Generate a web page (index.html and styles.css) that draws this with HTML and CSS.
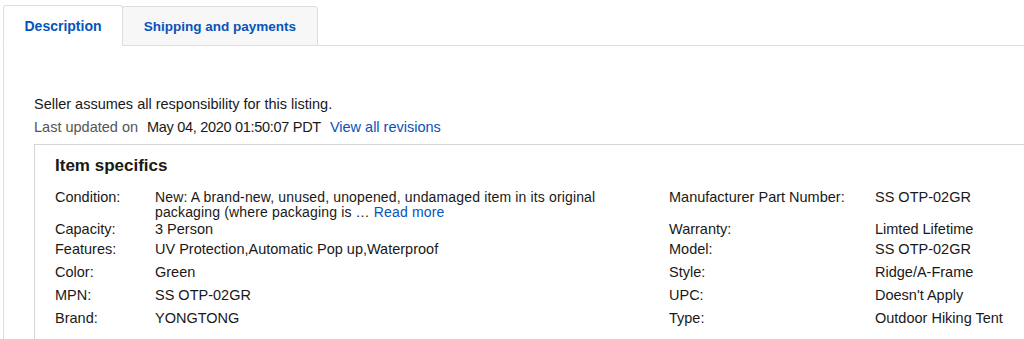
FILE: index.html
```html
<!DOCTYPE html>
<html lang="en">
<head>
<meta charset="utf-8">
<title>Item description</title>
<link rel="stylesheet" href="styles.css">
</head>
<body>
<div class="tabs">
  <div class="tab tab-active">Description</div>
  <div class="tab">Shipping and payments</div>
  <div class="tab-rest"></div>
</div>
<div class="panel">
  <p class="line">Seller assumes all responsibility for this listing.</p>
  <p class="line line-2"><span class="muted">Last updated on</span><span class="date">May 04, 2020 01:50:07 PDT</span><a class="link rev" href="#">View all revisions</a></p>
  <section class="specs">
    <h2 class="specs-title">Item specifics</h2>
    <div class="grid">
      <div class="lab">Condition:</div>
      <div class="val val-main val-wrap">New: A brand-new, unused, unopened, undamaged item in its original packaging (where packaging is … <a class="link" href="#">Read more</a></div>
      <div class="lab">Manufacturer Part Number:</div>
      <div class="val">SS OTP-02GR</div>

      <div class="lab">Capacity:</div>
      <div class="val val-main">3 Person</div>
      <div class="lab">Warranty:</div>
      <div class="val">Limted Lifetime</div>

      <div class="lab">Features:</div>
      <div class="val val-main">UV Protection,Automatic Pop up,Waterproof</div>
      <div class="lab">Model:</div>
      <div class="val">SS OTP-02GR</div>

      <div class="lab">Color:</div>
      <div class="val val-main">Green</div>
      <div class="lab">Style:</div>
      <div class="val">Ridge/A-Frame</div>

      <div class="lab">MPN:</div>
      <div class="val val-main">SS OTP-02GR</div>
      <div class="lab">UPC:</div>
      <div class="val">Doesn't Apply</div>

      <div class="lab">Brand:</div>
      <div class="val val-main">YONGTONG</div>
      <div class="lab">Type:</div>
      <div class="val">Outdoor Hiking Tent</div>
    </div>
  </section>
</div>
</body>
</html>
```
FILE: styles.css
```css
html, body {
  margin: 0;
  padding: 0;
  background: #ffffff;
  overflow: hidden;
  height: 339px;
}
body {
  font-family: "Liberation Sans", Arial, sans-serif;
  color: #191919;
  font-size: 14.5px;
}
.tabs {
  display: flex;
  align-items: flex-end;
  padding-top: 5px;
  padding-left: 3px;
  height: 41px;
}
.tab {
  box-sizing: border-box;
  height: 40px;
  border: 1px solid #dddddd;
  background: #f7f7f7;
  border-radius: 3px 3px 0 0;
  color: #0654ba;
  font-weight: bold;
  font-size: 13.5px;
  display: flex;
  align-items: center;
  justify-content: center;
  width: 196px;
  margin-left: -1px;
  padding-top: 1px;
}
.tab-active {
  margin-left: 0;
  width: 120px;
  height: 41px;
  background: #ffffff;
  border-bottom-color: #ffffff;
  font-size: 14px;
  padding-top: 0;
  position: relative;
  z-index: 1;
}
.tab-rest {
  flex: 1;
  border-bottom: 1px solid #dddddd;
}
.panel {
  box-sizing: border-box;
  margin-left: 3px;
  margin-right: -40px;
  border-left: 1px solid #dddddd;
  padding: 46px 0 0 30px;
  height: 293px;
  overflow: hidden;
}
.line {
  margin: 0;
  line-height: 24px;
}
.line-2 {
  margin-top: -1px;
}
.muted {
  color: #555555;
}
.date {
  margin-left: 9px;
  letter-spacing: -0.3px;
}
.link {
  color: #0654ba;
  text-decoration: none;
}
.rev {
  margin-left: 9px;
}
.specs {
  box-sizing: border-box;
  margin-top: 5px;
  border: 1px solid #d6d6d6;
  border-right: none;
  border-bottom: none;
  padding: 11px 0 0 20px;
  height: 200px;
}
.specs-title {
  margin: 0;
  font-size: 17px;
  line-height: 20px;
  font-weight: bold;
}
.grid {
  margin-top: 14px;
  display: grid;
  grid-template-columns: 100px 514px 206px 1fr;
  grid-template-rows: 32px 20px 23px 23px 23px 23px;
  line-height: 14px;
}
.val-main {
  padding-right: 30px;
}
.val-wrap {
  font-size: 14px;
  line-height: 15px;
  letter-spacing: 0.15px;
}
```
